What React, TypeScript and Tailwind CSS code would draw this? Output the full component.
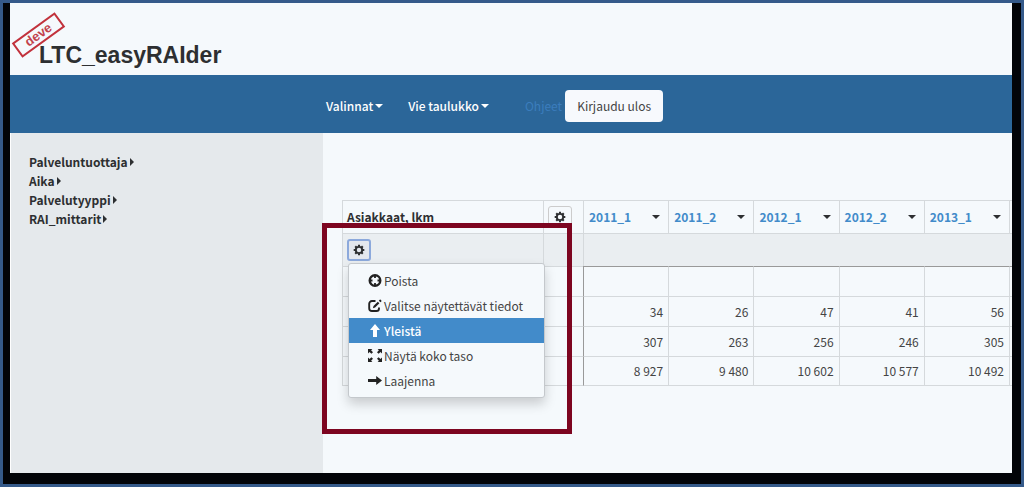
import React from "react";

interface IconProps {
    className?: string;
}

const CogIcon: React.FC<IconProps> = ({ className }) => (
    <svg viewBox="0 0 14 14" className={className} fill="none" stroke="currentColor" aria-hidden="true">
        <circle cx="7" cy="7" r="3.7" strokeWidth="2.2" />
        <path
            d="M7 .8v2M7 11.2v2M.8 7h2M11.2 7h2M2.6 2.6L4 4M10 10l1.4 1.4M2.6 11.4L4 10M10 4l1.4-1.4"
            strokeWidth="2.4"
        />
    </svg>
);

const TargetIcon: React.FC<IconProps> = ({ className }) => (
    <svg viewBox="0 0 14 14" className={className} fill="none" stroke="currentColor" aria-hidden="true">
        <circle cx="7" cy="6.5" r="5.3" strokeWidth="2.4" />
        <path d="M7 1v3M7 9v3M1.5 6.5h3M9.5 6.5h3" strokeWidth="1.8" />
    </svg>
);

const EditIcon: React.FC<IconProps> = ({ className }) => (
    <svg viewBox="0 0 14 14" className={className} fill="none" stroke="currentColor" aria-hidden="true">
        <path d="M7.5 2H4A2.8 2.8 0 0 0 1.2 4.8v4.4A2.8 2.8 0 0 0 4 12h4.4a2.6 2.6 0 0 0 2.6-2.6V8.6" strokeWidth="1.9" />
        <path d="M4.9 9.3l.6-2.3 4.3-4.3 1.6 1.6-4.3 4.3zM10.8 1.7l.9-.9a.7.7 0 0 1 1 0l.6.6a.7.7 0 0 1 0 1l-.9.9z" fill="currentColor" stroke="none" />
    </svg>
);

const ArrowUpIcon: React.FC<IconProps> = ({ className }) => (
    <svg viewBox="0 0 14 14" className={className} fill="currentColor" aria-hidden="true">
        <path d="M7 0l5 6H9v7H5V6H2z" />
    </svg>
);

const FullscreenIcon: React.FC<IconProps> = ({ className }) => (
    <svg viewBox="0 0 14 14" className={className} fill="currentColor" aria-hidden="true">
        <path d="M0 0h4.4L3.1 1.3l1.9 1.9-1.6 1.6-1.9-1.9L0 4.4zM14 0v4.4l-1.5-1.5-1.9 1.9L9 3.2l1.9-1.9L9.6 0zM0 13V8.6l1.5 1.5 1.9-1.9L5 9.8l-1.9 1.9L4.4 13zM14 13H9.6l1.3-1.3L9 9.8l1.6-1.6 1.9 1.9L14 8.6z" />
    </svg>
);

const ArrowRightIcon: React.FC<IconProps> = ({ className }) => (
    <svg viewBox="0 0 14 14" className={className} fill="currentColor" aria-hidden="true">
        <path d="M14 6.5L8.2 2v2.9H0v3.2h8.2V11z" />
    </svg>
);

const CaretDown: React.FC<IconProps> = ({ className }) => (
    <svg viewBox="0 0 8 4" className={className} fill="currentColor" aria-hidden="true">
        <path d="M0 0h8L4 4z" />
    </svg>
);

const CaretRight: React.FC<IconProps> = ({ className }) => (
    <svg viewBox="0 0 4 8" className={className} fill="currentColor" aria-hidden="true">
        <path d="M0 0v8l4-4z" />
    </svg>
);

const DIMENSIONS = ["Palveluntuottaja", "Aika", "Palvelutyyppi", "RAI_mittarit"];

const PERIODS = ["2011_1", "2011_2", "2012_1", "2012_2", "2013_1"];

const ROWS = [
    ["", "", "", "", ""],
    ["34", "26", "47", "41", "56"],
    ["307", "263", "256", "246", "305"],
    ["8 927", "9 480", "10 602", "10 577", "10 492"],
];

const MENU_ITEMS = [
    { label: "Poista", Icon: TargetIcon },
    { label: "Valitse näytettävät tiedot", Icon: EditIcon },
    { label: "Yleistä", Icon: ArrowUpIcon, active: true },
    { label: "Näytä koko taso", Icon: FullscreenIcon },
    { label: "Laajenna", Icon: ArrowRightIcon },
];

const Header = () => (
    <header className="relative h-[72px] pl-[29px] pt-[38px]">
        <h1 className="font-['Liberation_Sans',sans-serif] text-[23px] font-bold leading-7 text-[#2d2f31]">
            LTC_easyRAIder
        </h1>
        <span className="absolute left-[2px] top-[23px] flex h-[18px] w-[53px] -rotate-36 items-center justify-center border-2 border-[#c2323c] font-['Liberation_Sans',sans-serif] text-[13px] font-bold leading-3 text-[#c2424c]">
            deve
        </span>
    </header>
);

const NavBar = () => (
    <nav className="flex h-[58px] items-center bg-[#2b6699] pl-[316px] pt-1 font-medium text-white">
        <button type="button" className="mr-[25px] flex items-center gap-[2px]">
            Valinnat <CaretDown className="h-1 w-2" />
        </button>
        <button type="button" className="flex items-center gap-[2px]">
            Vie taulukko <CaretDown className="h-1 w-2" />
        </button>
        <a href="#ohjeet" className="ml-9 mr-[3px] font-normal text-[#3b7dbd]">
            Ohjeet
        </a>
        <button type="button" className="h-8 rounded bg-[#f7f9fd] px-3 font-normal text-[#444]">
            Kirjaudu ulos
        </button>
    </nav>
);

const Sidebar = () => (
    <aside className="w-[313px] shrink-0 border-l border-white bg-[#e5e9ec] pl-[18px] pt-[19px]">
        <ul>
            {DIMENSIONS.map((name) => (
                <li key={name}>
                    <button type="button" className="flex h-[19px] items-center gap-[2px] font-bold leading-[19px]">
                        {name} <CaretRight className="h-2 w-1" />
                    </button>
                </li>
            ))}
        </ul>
    </aside>
);

const RowMenu = () => (
    <ul className="absolute left-[6px] top-[63px] z-10 w-[197px] rounded-[3px] border border-[#c4c8cc] bg-[#f5f9fc] py-1 shadow-[0_6px_12px_rgba(0,0,0,0.18)]">
        {MENU_ITEMS.map(({ label, Icon, active }) => (
            <li key={label}>
                <button
                    type="button"
                    className={
                        active
                            ? "flex h-[25px] w-full items-center gap-[2px] bg-[#428bca] pl-[19px] font-medium text-white"
                            : "flex h-[25px] w-full items-center gap-[2px] pl-[19px] text-[#444]"
                    }
                >
                    <Icon className={active ? "size-[14px]" : "size-[14px] text-[#222]"} />
                    {label}
                </button>
            </li>
        ))}
    </ul>
);

const DataTable = () => (
    <table className="w-full table-fixed border-separate border-spacing-0">
        <colgroup>
            <col className="w-[201px]" />
            <col className="w-10" />
            {PERIODS.map((period) => (
                <col key={period} />
            ))}
            <col className="w-[3px]" />
        </colgroup>
        <thead>
            <tr className="h-[33px]">
                <th className="border-l border-t border-[#d5d9dc] px-1 text-left">Asiakkaat, lkm</th>
                <th className="border-l border-t border-[#d5d9dc] pl-1">
                    <button
                        type="button"
                        aria-label="Sarakkeiden asetukset"
                        className="flex h-[22px] w-6 items-center justify-center rounded-[3px] border border-[#ccc]"
                    >
                        <CogIcon className="size-3" />
                    </button>
                </th>
                {PERIODS.map((period) => (
                    <th key={period} className="border-l border-t border-[#d5d9dc] pl-[5px] pr-2">
                        <div className="flex items-center justify-between">
                            <a href={`#${period}`} className="text-[#428bca]">{period}</a>
                            <CaretDown className="h-1 w-2" />
                        </div>
                    </th>
                ))}
                <th className="border-l border-t border-[#d5d9dc]" />
            </tr>
            <tr className="h-[33px] bg-[#eaeef1]">
                <th className="border-l border-t border-[#d5d9dc] pl-1">
                    <button
                        type="button"
                        aria-label="Rivin asetukset"
                        className="flex h-[22px] w-6 items-center justify-center rounded-[3px] border-2 border-[#8ca9dc] bg-[#e4e8ee]"
                    >
                        <CogIcon className="size-3" />
                    </button>
                </th>
                <th className="border-l border-t border-[#d5d9dc]" />
                <th colSpan={6} className="border-l border-t border-[#d5d9dc]" />
            </tr>
        </thead>
        <tbody className="[&>tr:first-child>td]:border-t-[#999] [&>tr:last-child>*]:border-b">
            {ROWS.map((row, i) => (
                <tr key={i} className="h-[30px]">
                    <th className="border-l border-t border-[#d5d9dc]" />
                    <th className="border-l border-t border-[#d5d9dc]" />
                    {row.map((value, j) => (
                        <td
                            key={j}
                            className={
                                j === 0
                                    ? "border-l border-t border-[#d5d9dc] border-l-[#999] pr-[5px] text-right text-[#444]"
                                    : "border-l border-t border-[#d5d9dc] pr-[5px] text-right text-[#444]"
                            }
                        >
                            {value}
                        </td>
                    ))}
                    <td className="border-l border-t border-[#d5d9dc]" />
                </tr>
            ))}
        </tbody>
    </table>
);

export default function App() {
    return (
        <div className="flex min-h-screen flex-col border-[3px] border-[#355a8a] bg-[#020408] pb-[11px] pl-[7px] pr-[9px] font-['Noto_Sans_CJK_SC',sans-serif] text-xs leading-5 text-[#2d2f31]">
            <div className="flex flex-1 flex-col bg-[#f5f9fc]">
                <Header />
                <NavBar />
                <div className="flex flex-1">
                    <Sidebar />
                    <main className="min-w-0 flex-1 pl-[19px] pt-[67px]">
                        <div className="relative">
                            <DataTable />
                            <RowMenu />
                            <div className="pointer-events-none absolute left-[-20px] top-[23px] z-20 h-[211px] w-[250px] border-[5px] border-[#7d0520]" />
                        </div>
                    </main>
                </div>
            </div>
        </div>
    );
}
